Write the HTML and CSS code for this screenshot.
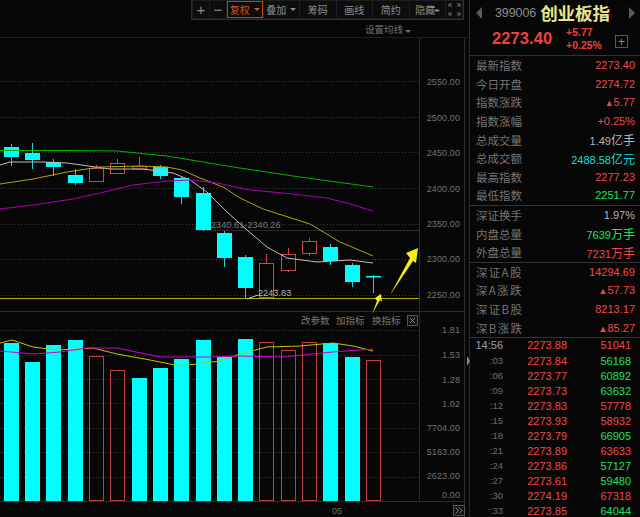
FILE: index.html
```html
<!DOCTYPE html>
<html lang="zh">
<head>
<meta charset="utf-8">
<title>创业板指</title>
<link rel="stylesheet" href="styles.css">
</head>
<body>
<div class="app">
  <main class="main">
    <div class="toolbar">
      <div class="tools">
        <span class="tool tool-s glyph">+</span>
        <span class="tool tool-s glyph">−</span>
        <span class="tool tool-on">复权<i class="caret"></i></span>
        <span class="tool">叠加<i class="caret"></i></span>
        <span class="tool">筹码</span>
        <span class="tool">画线</span>
        <span class="tool">简约</span>
        <span class="tool tool-hide">隐藏<small>▸▸</small></span>
        <span class="tool tool-s">
          <svg class="full" viewBox="0 0 13 13"><path d="M1 4V1h3M9 1h3v3M12 9v3H9M4 12H1V9M1 1l3 3M12 1L9 4M12 12L9 9M1 12l3-3"/></svg>
        </span>
      </div>
    </div>
    <div class="ma-bar"><span class="ma-text">设置均线<i class="caret"></i></span></div>
    <svg class="chart" viewBox="0 38 469 479">
      <g class="grid">
        <path d="M0 81.5H419M0 117.5H419M0 152.5H419M0 188.5H419M0 224.5H419M0 259.5H419M0 295.5H419"/>
        <path d="M0 330.5H419M0 355.5H419M0 379.5H419M0 403.5H419M0 428.5H419M0 452.5H419M0 477.5H419"/>
      </g>
      <g class="frame">
        <path d="M419.500 38V501M464.500 38V517M0 311.500H464M0 501.500H464M195 230.500H419"/>
      </g>
      <g class="axis">
        <text x="460" y="85">2550.00</text>
        <text x="460" y="121">2500.00</text>
        <text x="460" y="156">2450.00</text>
        <text x="460" y="192">2400.00</text>
        <text x="460" y="227">2350.00</text>
        <text x="460" y="262">2300.00</text>
        <text x="460" y="298">2250.00</text>
        <text x="460" y="333">1.81</text>
        <text x="460" y="358">1.53</text>
        <text x="460" y="383">1.28</text>
        <text x="460" y="407">1.02</text>
        <text x="460" y="431">7704.00</text>
        <text x="460" y="455">5163.00</text>
        <text x="460" y="479">2623.00</text>
        <text x="460" y="498">0.00</text>
      </g>
      <g class="wick-down">
        <path d="M11.500 144V166M32.500 143V169M53.500 159V176M75.500 169V185M160.500 165V179M181.500 177V204M203.500 187V231M224.500 231V267M245.500 255V299M330.500 244V265M352.500 263V287M373.500 275V293"/>
      </g>
      <g class="wick-up">
        <path d="M96.500 165V168M117.500 159V163M139.500 157V166M266.500 254V263M288.500 248V254M288.500 271V272M309.500 238V241M309.500 253V256"/>
      </g>
      <g class="down">
        <rect x="4" y="147" width="15" height="10"/>
        <rect x="25" y="153" width="15" height="7"/>
        <rect x="46" y="162" width="15" height="5"/>
        <rect x="68" y="175" width="15" height="8"/>
        <rect x="153" y="167" width="15" height="9"/>
        <rect x="174" y="178" width="15" height="19"/>
        <rect x="196" y="193" width="15" height="37"/>
        <rect x="217" y="233" width="15" height="25"/>
        <rect x="238" y="257" width="15" height="31"/>
        <rect x="323" y="247" width="15" height="14"/>
        <rect x="345" y="265" width="15" height="17"/>
        <rect x="366" y="276" width="15" height="1.500"/>
      </g>
      <g class="up">
        <rect x="89.500" y="168.500" width="14" height="13"/>
        <rect x="110.500" y="163.500" width="14" height="10"/>
        <rect x="132.500" y="166.500" width="14" height="2.500"/>
        <rect x="259.500" y="263.500" width="14" height="34"/>
        <rect x="281.500" y="254.500" width="14" height="16"/>
        <rect x="302.500" y="241.500" width="14" height="12"/>
      </g>
      <polyline class="ma white" points="0,165 10,162 43,162 67,163 110,169 143,169 173,173 190,180 207,192 227,212 247,230 267,247 287,258 317,262 350,260 373,263"/>
      <polyline class="ma olive" points="0,184 33,179 67,172 100,167 140,166 167,167 182,170 200,178 223,187 240,198 263,209 310,224 340,242 373,256"/>
      <polyline class="ma purple" points="0,209 33,205 73,199 100,193 133,185 167,181 190,180 217,183 250,190 283,193 327,198 350,204 373,211"/>
      <polyline class="ma green" points="0,150.500 67,150.500 117,151 167,156 233,167 300,177 373,187"/>
      <path class="support" d="M0 298.500H419"/>
      <text class="note" x="211" y="228">2340.61-2340.26</text>
      <path class="leader" d="M247 299L258 295"/>
      <text class="note note-light" x="258" y="296">2243.83</text>
      <path class="arrow" d="M390 295L410 258L406 253L418 248L416 263L413 261Z"/>
      <path class="arrow" d="M372 314L377 301L375 298L381 294L382 302L380 300Z"/>
      <g class="vol-down">
        <rect x="4" y="343" width="15" height="158"/>
        <rect x="25" y="362" width="15" height="139"/>
        <rect x="46" y="345" width="15" height="156"/>
        <rect x="68" y="340" width="15" height="161"/>
        <rect x="132" y="378" width="15" height="123"/>
        <rect x="153" y="368" width="15" height="133"/>
        <rect x="174" y="359" width="15" height="142"/>
        <rect x="196" y="340" width="15" height="161"/>
        <rect x="217" y="357" width="15" height="144"/>
        <rect x="238" y="339" width="15" height="162"/>
        <rect x="323" y="343" width="15" height="158"/>
        <rect x="345" y="357" width="15" height="144"/>
      </g>
      <g class="vol-up">
        <rect x="89.500" y="356.500" width="14" height="144"/>
        <rect x="110.500" y="370.500" width="14" height="130"/>
        <rect x="259.500" y="342.500" width="14" height="158"/>
        <rect x="281.500" y="350.500" width="14" height="150"/>
        <rect x="302.500" y="342.500" width="14" height="158"/>
        <rect x="366.500" y="360.500" width="14" height="140"/>
      </g>
      <polyline class="ind yellow" points="0,343 12,340 33,347 57,350 93,348 117,354 150,360 180,366 220,361 240,354 267,347 300,346 333,343 353,346 373,351"/>
      <polyline class="ind magenta" points="0,351 33,354 60,352 87,348 117,348 160,357 207,357 240,356 283,357 333,352 373,349"/>
      <g class="ctrl">
        <text x="301" y="324">改参数</text>
        <text x="336" y="324">加指标</text>
        <text x="372" y="324">换指标</text>
      </g>
      <rect class="close-box" x="407.500" y="315.500" width="10" height="10"/>
      <path class="close-x" d="M410 318L415 323M415 318L410 323"/>
      <text class="date" x="332" y="514">05</text>
      <path class="handle" d="M467 356L470 361L467 366Z"/>
      <rect class="more-box" x="453.500" y="505.500" width="11" height="10"/>
      <path class="more" d="M455.500 507.500L458.500 510.500L455.500 513.500M459 507.500L462 510.500L459 513.500"/>
    </svg>
  </main>
  <aside class="side">
    <header class="head">
      <div class="title">
        <i class="nav nav-l"></i>
        <span class="code">399006</span>
        <span class="name">创业板指</span>
        <i class="nav nav-r"></i>
      </div>
      <div class="quote">
        <span class="price">2273.40</span>
        <span class="delta"><b>+5.77</b><b>+0.25%</b></span>
        <span class="add">+</span>
      </div>
    </header>
    <section class="group">
      <div class="row"><span>最新指数</span><b class="red">2273.40</b></div>
      <div class="row"><span>今日开盘</span><b class="red">2274.72</b></div>
      <div class="row"><span>指数涨跌</span><b class="red"><small>▲</small>5.77</b></div>
      <div class="row"><span>指数涨幅</span><b class="red">+0.25%</b></div>
      <div class="row"><span>总成交量</span><b class="white">1.49<em>亿手</em></b></div>
      <div class="row"><span>总成交额</span><b class="cyan">2488.58<em>亿元</em></b></div>
      <div class="row"><span>最高指数</span><b class="red">2277.23</b></div>
      <div class="row"><span>最低指数</span><b class="lime">2251.77</b></div>
    </section>
    <section class="group">
      <div class="row"><span>深证换手</span><b class="white">1.97%</b></div>
      <div class="row"><span>内盘总量</span><b class="lime">7639<em>万手</em></b></div>
      <div class="row"><span>外盘总量</span><b class="red">7231<em>万手</em></b></div>
    </section>
    <section class="group">
      <div class="row row-latin"><span>深证A股</span><b class="red">14294.69</b></div>
      <div class="row row-latin"><span>深A涨跌</span><b class="red"><small>▲</small>57.73</b></div>
      <div class="row row-latin"><span>深证B股</span><b class="red">8213.17</b></div>
      <div class="row row-latin"><span>深B涨跌</span><b class="red"><small>▲</small>85.27</b></div>
    </section>
    <section class="ticks">
      <div class="tick"><span class="time time-main">14:56</span><span class="red">2273.88</span><span class="red">51041</span></div>
      <div class="tick"><span class="time">:03</span><span class="red">2273.84</span><span class="lime">56168</span></div>
      <div class="tick"><span class="time">:06</span><span class="red">2273.77</span><span class="lime">60892</span></div>
      <div class="tick"><span class="time">:09</span><span class="red">2273.73</span><span class="lime">63632</span></div>
      <div class="tick"><span class="time">:12</span><span class="red">2273.83</span><span class="red">57778</span></div>
      <div class="tick"><span class="time">:15</span><span class="red">2273.93</span><span class="red">58932</span></div>
      <div class="tick"><span class="time">:18</span><span class="red">2273.79</span><span class="lime">66905</span></div>
      <div class="tick"><span class="time">:21</span><span class="red">2273.89</span><span class="red">63633</span></div>
      <div class="tick"><span class="time">:24</span><span class="red">2273.86</span><span class="lime">57127</span></div>
      <div class="tick"><span class="time">:27</span><span class="red">2273.61</span><span class="lime">59480</span></div>
      <div class="tick"><span class="time">:30</span><span class="red">2274.19</span><span class="red">67318</span></div>
      <div class="tick"><span class="time">:33</span><span class="red">2273.85</span><span class="lime">64044</span></div>
    </section>
  </aside>
</div>
</body>
</html>
```
FILE: styles.css
```css
* { box-sizing: border-box; }
html, body { margin: 0; height: 100%; background: #070707; overflow: hidden; }
body { font-family: "Liberation Sans", "Noto Sans CJK SC", sans-serif; color: #8b8b8b; }

.app { display: flex; width: 640px; height: 517px; overflow: hidden; }
.main { width: 470px; flex: none; display: flex; flex-direction: column; border-right: 1px solid #2c2c2c; }

.toolbar { height: 21px; display: flex; justify-content: flex-end; padding-right: 5px; }
.tools { display: flex; gap: 1px; height: 20px; padding: 1px; background: #1e1e1e; border: 1px solid #2e2e2e; border-top: 0; }
.tool { width: 35.500px; display: flex; align-items: center; justify-content: center; gap: 2px; background: #0d0d0d; font-size: 10px; color: #8f8f8f; font-family: "Noto Sans CJK SC", sans-serif; }
.tool-s { width: 16px; }
.glyph { font-family: "Liberation Sans", sans-serif; font-size: 15px; font-weight: 400; }
.tool-on { color: #d2561c; border: 1px solid #b8460f; }
.tool-hide { gap: 0; }
.tool-hide small { font-size: 6px; letter-spacing: -1px; }
.caret { display: inline-block; margin-left: 2px; border: 3px solid transparent; border-top-color: currentColor; border-bottom: 0; }
.full { width: 13px; height: 13px; fill: none; stroke: #6d6d6d; stroke-width: 1; }

.ma-bar { height: 17px; display: flex; justify-content: flex-end; align-items: center; padding-right: 57px; border-bottom: 1px solid #1d1d1d; margin-right: 1px; }
.ma-text { font-size: 9.500px; color: #6f6f6f; font-family: "Noto Sans CJK SC", sans-serif; white-space: nowrap; }

.chart { display: block; width: 469px; height: 479px; flex: none; overflow: visible; font-family: "Liberation Sans", "Noto Sans CJK SC", sans-serif; }
.grid path { fill: none; stroke: #3a3a3a; stroke-width: 1; stroke-dasharray: 1 2; }
.frame path { fill: none; stroke: #2b2b2b; stroke-width: 1; }
.axis text { font-size: 9px; fill: #727272; text-anchor: end; letter-spacing: .1px; }
.wick-down path { stroke: #1fd6d6; stroke-width: 1; fill: none; }
.wick-up path { stroke: #c9494a; stroke-width: 1; fill: none; }
.down rect { fill: #00ffff; }
.up rect { fill: none; stroke: #c9494a; stroke-width: 1; }
.ma { fill: none; stroke-width: 1; stroke-linejoin: round; }
.ma.white { stroke: #bdbdbd; }
.olive { stroke: #b2a40c; }
.purple { stroke: #b000b0; }
.green { stroke: #00b400; }
.support { stroke: #b0b000; stroke-width: 1; fill: none; }
.note { font-size: 9px; fill: #7d7d7d; letter-spacing: .1px; }
.note-light { fill: #b5b5b5; }
.leader { stroke: #cfcfcf; fill: none; }
.arrow { fill: #f7f000; }
.vol-down rect { fill: #00ffff; }
.vol-up rect { fill: none; stroke: #c0403f; stroke-width: 1; }
.ind { fill: none; stroke-width: 1; }
.yellow { stroke: #c4c000; }
.magenta { stroke: #d000d0; }
.ctrl text { font-size: 9.500px; fill: #7a7a7a; font-family: "Noto Sans CJK SC", sans-serif; }
.close-box, .more-box { fill: #141414; stroke: #555; stroke-width: 1; }
.close-x, .more { fill: none; stroke: #888; stroke-width: 1; }
.date { font-size: 9px; fill: #6f6f6f; }
.handle { fill: #8a8a8a; }

.side { flex: 1; min-width: 0; display: flex; flex-direction: column; }
.head { height: 56px; flex: none; border-bottom: 1px solid #333; }
.title { height: 25px; display: flex; align-items: center; padding: 1px 5px 0 6px; }
.nav { width: 0; height: 0; border: 6px solid transparent; flex: none; }
.nav-l { border-left: 0; border-right-color: #5b5b5b; }
.nav-r { border-right: 0; border-left-color: #5b5b5b; margin-left: auto; }
.code { margin-left: 13px; font-size: 12.500px; color: #8d8d8d; letter-spacing: -.1px; }
.name { margin-left: 4px; font-size: 17.500px; font-weight: 700; color: #e9e487; font-family: "Noto Sans CJK SC", sans-serif; line-height: 1; }
.quote { display: flex; align-items: center; padding: 0 0 2px 22px; height: 29px; }
.price { width: 74px; font-size: 16.500px; font-weight: 700; color: #f0413f; letter-spacing: .1px; }
.delta { display: flex; flex-direction: column; gap: 2px; font-size: 10.500px; color: #e8413f; line-height: 11px; }
.delta b { font-weight: 700; }
.add { margin: 6px 12px 0 auto; width: 13px; height: 13px; border: 1px solid #5a5a5a; display: flex; align-items: center; justify-content: center; font-size: 12px; line-height: 1; color: #8a8a8a; }

.group { flex: none; padding: 0 5px 0 6px; border-bottom: 1px solid #333; display: flex; flex-direction: column; }
.row { display: flex; justify-content: space-between; align-items: center; height: 18.600px; }
.row span { font-size: 11.500px; color: #757575; font-family: "Noto Sans CJK SC", sans-serif; }
.row-latin span { letter-spacing: 1.300px; }
.row b { font-size: 11px; font-weight: 400; letter-spacing: 0; }
.row em { font-style: normal; font-size: 12px; font-family: "Noto Sans CJK SC", sans-serif; }
.row small { font-size: 9px; vertical-align: 0; }
.red { color: #f0494a; }
.lime { color: #1fe05a; }
.cyan { color: #16dede; }
.white { color: #b4b4b4; }

.ticks { display: flex; flex-direction: column; }
.tick { display: grid; grid-template-columns: 33px 64px 64px; height: 15.100px; align-items: center; font-size: 11px; line-height: 10px; text-align: right; }
.time { font-size: 9.500px; color: #6d6d6d; }
.time-main { font-size: 11px; color: #a0a0a0; }
```
